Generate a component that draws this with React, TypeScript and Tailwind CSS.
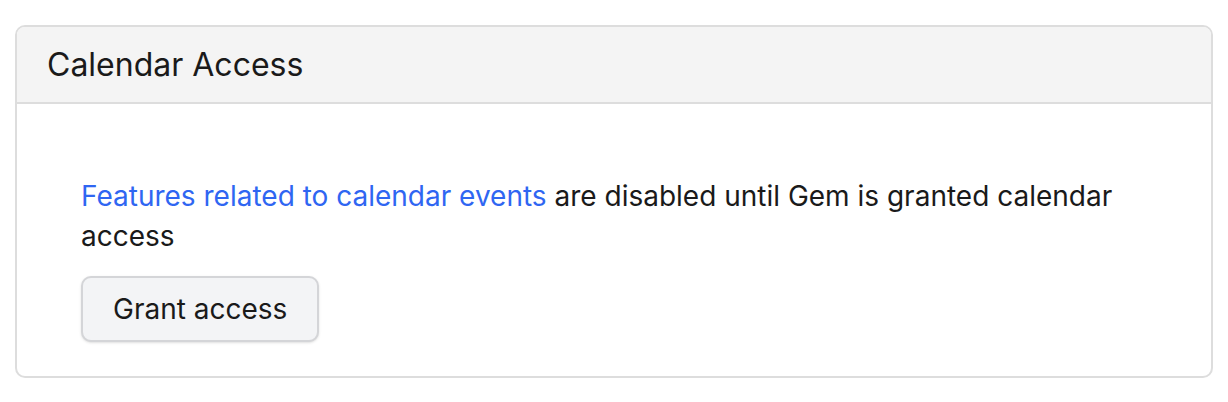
export default function App() {
  return (
    <div className="min-h-screen bg-white px-[15px] pt-[25px] font-['Inter',sans-serif] text-[#1a1a1a]">
      <div className="rounded-[10px] border-2 border-[#dddddd] overflow-hidden">
        <div className="bg-[#f4f4f4] border-b-2 border-[#dddddd] h-[77px] flex items-center px-[30px]">
          <h2 className="text-[32px] font-normal">Calendar Access</h2>
        </div>
        <div className="px-[64px] pt-[72px] pb-[34px]">
          <p className="text-[28px] leading-[40px]">
            <a className="text-[#2f66f2]">Features related to calendar events</a> are disabled until Gem is granted calendar access
          </p>
          <button className="mt-[20px] h-[66px] px-[30px] rounded-[10px] border-2 border-[#d4d5d8] bg-[#f3f4f6] text-[28px] shadow-sm">
            Grant access
          </button>
        </div>
      </div>
    </div>
  );
}
